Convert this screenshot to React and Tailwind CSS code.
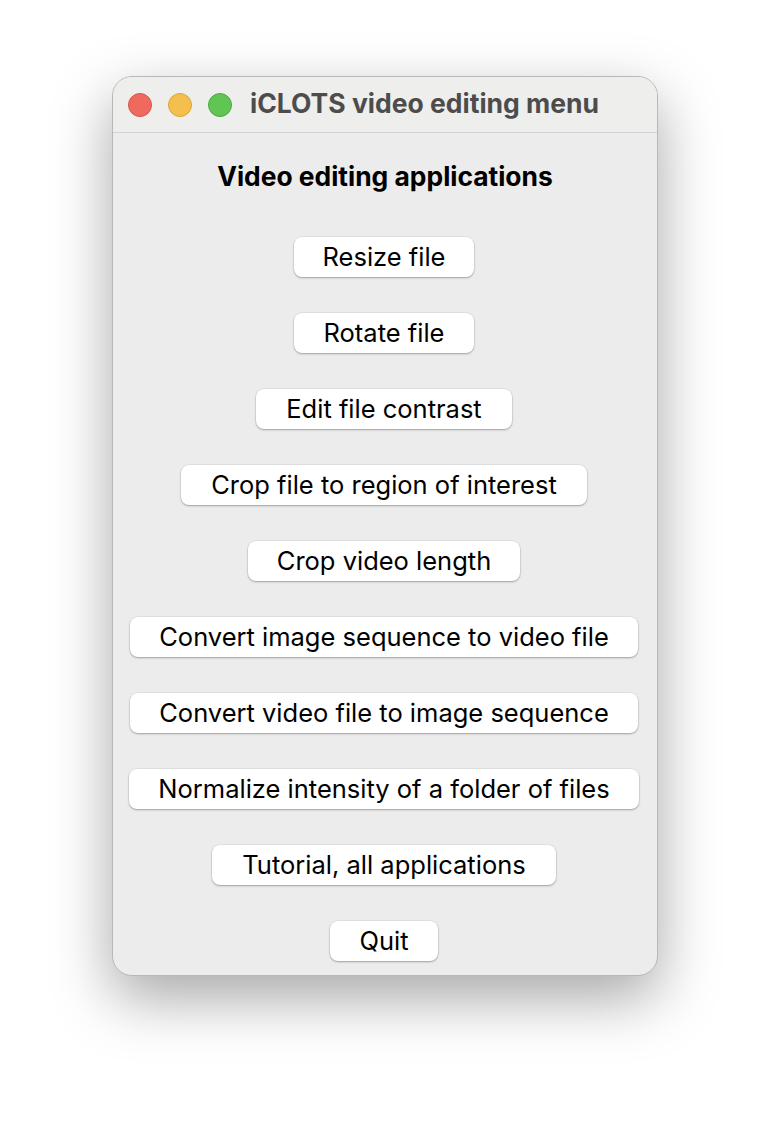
import React from "react";

const buttons = [
  { label: "Resize file", w: "w-[180px]" },
  { label: "Rotate file", w: "w-[180px]" },
  { label: "Edit file contrast", w: "w-[256px]" },
  { label: "Crop file to region of interest", w: "w-[406px]" },
  { label: "Crop video length", w: "w-[272px]" },
  { label: "Convert image sequence to video file", w: "w-[508px]" },
  { label: "Convert video file to image sequence", w: "w-[508px]" },
  { label: "Normalize intensity of a folder of files", w: "w-[510px]" },
  { label: "Tutorial, all applications", w: "w-[344px]" },
  { label: "Quit", w: "w-[108px]" },
];

export default function App() {
  return (
    <div
      className="w-[770px] h-[1124px] bg-white pt-[76px] pl-[112px]"
      style={{ fontFamily: "Inter, 'Noto Sans', 'Liberation Sans', sans-serif" }}
    >
      <div className="w-[546px] h-[900px] rounded-[20px] bg-[#ececec] border border-[#b8b8b8] shadow-[0_22px_60px_rgba(0,0,0,0.35)] overflow-hidden flex flex-col">
        <div className="h-[56px] shrink-0 flex items-center bg-[#eeeeed] border-b border-[#d2d2d2] pl-[15px]">
          <div className="flex gap-[16px]">
            <div className="w-[24px] h-[24px] rounded-full bg-[#ee6a5f] border border-[#d9534a]" />
            <div className="w-[24px] h-[24px] rounded-full bg-[#f5bf4f] border border-[#d9a43c]" />
            <div className="w-[24px] h-[24px] rounded-full bg-[#61c554] border border-[#4ea843]" />
          </div>
          <div className="ml-[18px] mb-[3px] text-[26.5px] leading-[32px] font-bold text-[#4c4c4c]">
            iCLOTS video editing menu
          </div>
        </div>
        <div className="flex flex-col items-center pt-[27px]">
          <div className="text-[26.4px] leading-[32px] font-bold text-black">
            Video editing applications
          </div>
          <div className="mt-[45px] flex flex-col items-center gap-[36px] pr-[2px]">
            {buttons.map((b) => (
              <div
                key={b.label}
                className={`${b.w} h-[40px] rounded-[8px] bg-white flex items-center justify-center text-[25.5px] leading-[30px] text-black shadow-[0_1px_2px_rgba(0,0,0,0.3),0_0_0_0.5px_rgba(0,0,0,0.08)] whitespace-nowrap`}
              >
                {b.label}
              </div>
            ))}
          </div>
        </div>
      </div>
    </div>
  );
}
